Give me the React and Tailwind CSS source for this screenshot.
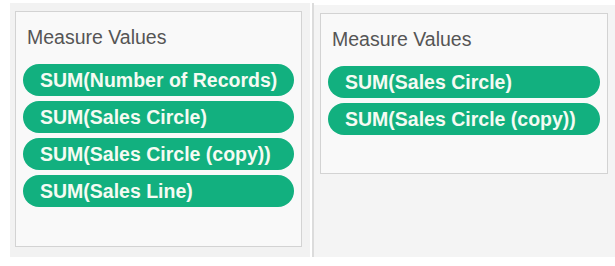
const leftPills = [
    "SUM(Number of Records)",
    "SUM(Sales Circle)",
    "SUM(Sales Circle (copy))",
    "SUM(Sales Line)",
];

const rightPills = ["SUM(Sales Circle)", "SUM(Sales Circle (copy))"];

const Pill = ({ label }) => (
    <div className="h-[32px] rounded-full bg-[#12b07f] flex items-center pl-[17px] pt-[1px] text-[19.5px] font-semibold text-[#f5fbf3] leading-none whitespace-nowrap">
        {label}
    </div>
);

const MeasureCard = ({ pills, className }) => (
    <div className={`border border-[#d3d3d3] bg-[#f9f9f9] ${className}`}>
        <div className="pl-[11px] pt-[13px] h-[37px] leading-[24px] text-[19.5px] text-[#555555]">
            Measure Values
        </div>
        <div className="mt-[15px] px-[7px] flex flex-col gap-[5px]">
            {pills.map((p) => (
                <Pill key={p} label={p} />
            ))}
        </div>
    </div>
);

export default function App() {
    return (
        <div
            className="w-[615px] h-[266px] bg-white flex items-start"
            style={{ fontFamily: '"Liberation Sans", Arial, sans-serif' }}
        >
            <div className="ml-[10px] mt-[3px] w-[300px] h-[254px] bg-[#f2f2f2] pl-[5px] pt-[8px]">
                <MeasureCard pills={leftPills} className="w-[287px] h-[236px]" />
            </div>
            <div className="ml-[2px] mt-[3px] w-[2px] h-[254px] bg-[#dcdcdc]" />
            <div className="mt-[5px] flex-1 h-[252px] bg-[#f4f4f4] pl-[6px] pt-[8px]">
                <MeasureCard pills={rightPills} className="w-[288px] h-[161px]" />
            </div>
        </div>
    );
}
